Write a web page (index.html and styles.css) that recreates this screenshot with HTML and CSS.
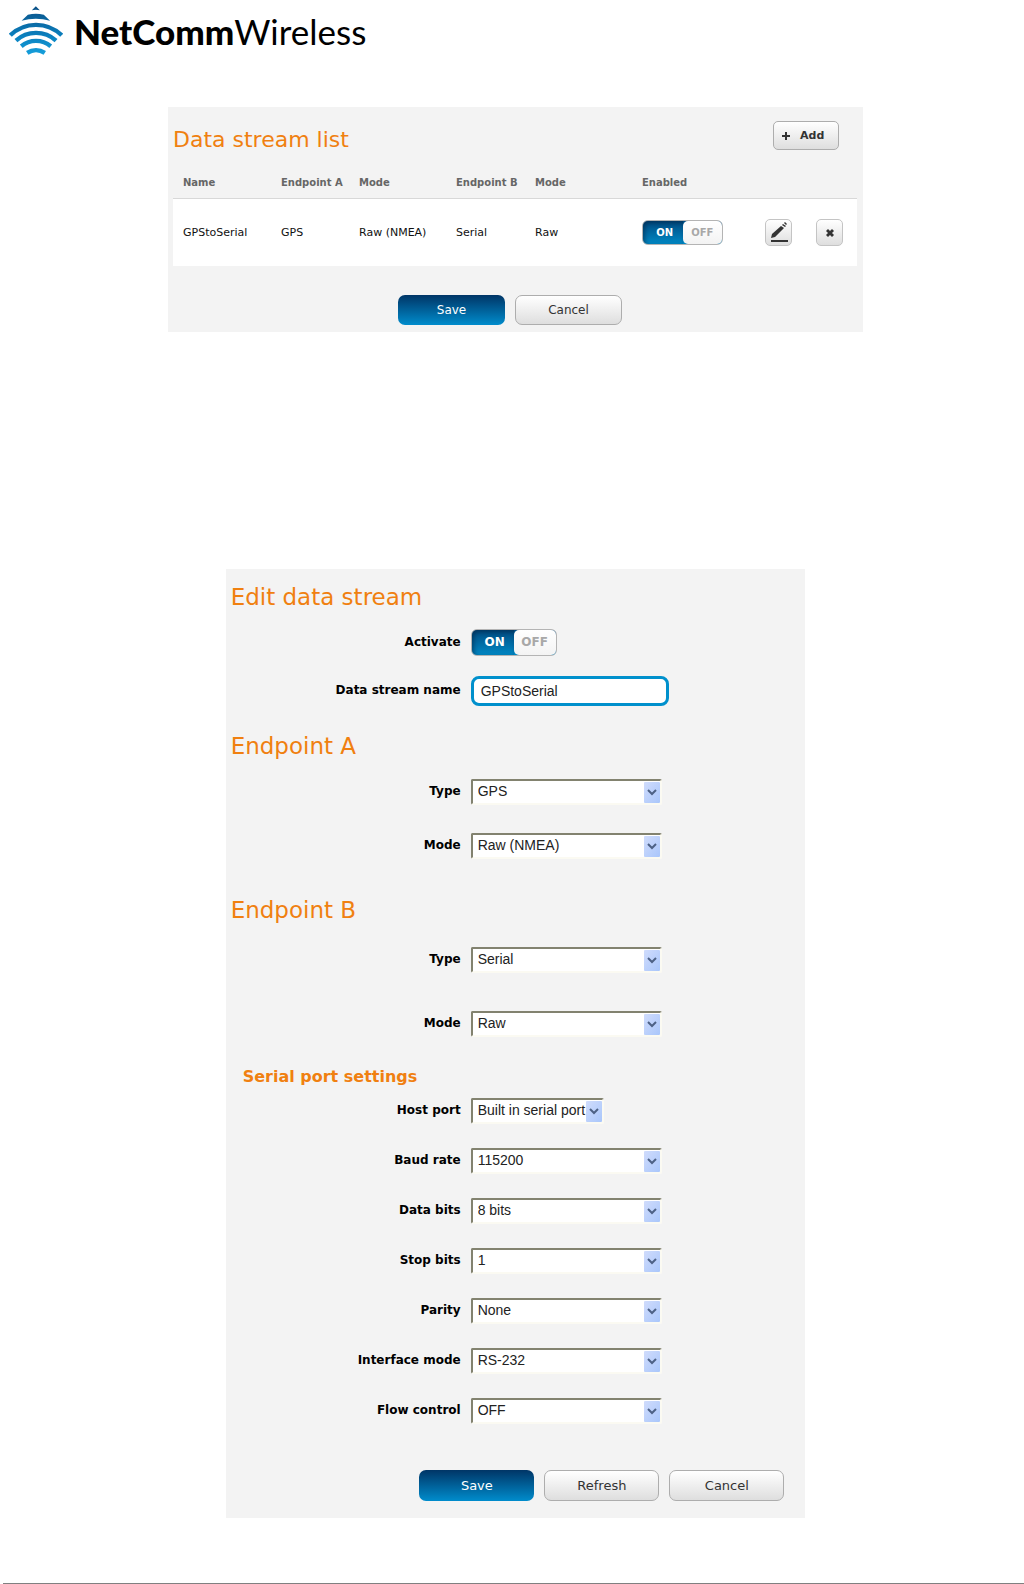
FILE: index.html
```html
<!DOCTYPE html>
<html lang="en">
<head>
    <meta charset="UTF-8">
    <meta name="viewport" content="width=device-width, initial-scale=1.0">
    <title>Data stream manager</title>
    <link rel="stylesheet" href="styles.css">
</head>
<body>
    <header class="header">
        <svg class="logo" viewBox="0 0 163 147" aria-hidden="true">
            <defs>
                <linearGradient id="logo-fill" x1="0" y1="0" x2="0" y2="147" gradientUnits="userSpaceOnUse">
                    <stop offset="0" stop-color="#0a4f85"/>
                    <stop offset="0.6" stop-color="#0b7fbd"/>
                    <stop offset="1" stop-color="#16a0dc"/>
                </linearGradient>
            </defs>
            <g fill="url(#logo-fill)">
                <path d="M81 0L93 12Q81 9 69 12Z"/>
                <path d="M57 26Q81 20 105 26L124 44Q81 32 38 44Z"/>
            </g>
            <g fill="none" stroke="url(#logo-fill)" stroke-width="13">
                <path d="M4 88A111 111 0 0 1 159 88"/>
                <path d="M21 104A90 90 0 0 1 142 104"/>
                <path d="M37 121A70 70 0 0 1 126 121"/>
                <path d="M55 141A48 48 0 0 1 108 141"/>
            </g>
        </svg>
        <div class="brand"><b>NetComm</b>Wireless</div>
    </header>

    <main class="main">
        <section class="panel list">
            <div class="list__head">
                <h1 class="list__title">Data stream list</h1>
                <button type="button" class="btn btn_add">
                    <svg viewBox="0 0 8 8" aria-hidden="true"><path d="M3 0h2v3h3v2H5v3H3V5H0V3h3z"/></svg>
                    Add
                </button>
            </div>
            <table class="streams">
                <colgroup>
                    <col class="col-name">
                    <col class="col-endpoint-a">
                    <col class="col-mode-a">
                    <col class="col-endpoint-b">
                    <col class="col-mode-b">
                    <col class="col-enabled">
                    <col class="col-action">
                    <col class="col-action">
                </colgroup>
                <thead>
                    <tr>
                        <th>Name</th>
                        <th>Endpoint A</th>
                        <th>Mode</th>
                        <th>Endpoint B</th>
                        <th>Mode</th>
                        <th>Enabled</th>
                        <th></th>
                        <th></th>
                    </tr>
                </thead>
                <tbody>
                    <tr>
                        <td>GPStoSerial</td>
                        <td>GPS</td>
                        <td>Raw (NMEA)</td>
                        <td>Serial</td>
                        <td>Raw</td>
                        <td>
                            <label class="toggle">
                                <input type="checkbox" aria-label="Enabled" checked>
                                <span class="toggle__on">ON</span>
                                <span class="toggle__off">OFF</span>
                            </label>
                        </td>
                        <td>
                            <button type="button" class="btn btn_icon" aria-label="Edit">
                                <svg viewBox="0 0 20 22" aria-hidden="true"><path d="M2 18h17v2H2zM2 16l1-4 9-8 3 2-9 9zM13 3l1-1 3 2-1 1zM15 1l1-1 2 2-1 1z"/></svg>
                            </button>
                        </td>
                        <td>
                            <button type="button" class="btn btn_icon" aria-label="Delete">
                                <svg viewBox="0 0 20 22" aria-hidden="true"><path d="M6 9l2-2 2 2 2-2 2 2-2 2 2 2-2 2-2-2-2 2-2-2 2-2z"/></svg>
                            </button>
                        </td>
                    </tr>
                </tbody>
            </table>
            <div class="list__actions">
                <button type="button" class="btn btn_primary">Save</button>
                <button type="button" class="btn">Cancel</button>
            </div>
        </section>

        <form class="panel edit">
            <h2 class="edit__title">Edit data stream</h2>
            <div class="fields">
                <div class="field">
                    <label for="activate">Activate</label>
                    <div class="toggle toggle_big">
                        <input type="checkbox" id="activate" checked>
                        <span class="toggle__on">ON</span>
                        <span class="toggle__off">OFF</span>
                    </div>
                </div>
                <div class="field">
                    <label for="stream-name">Data stream name</label>
                    <input type="text" class="text" id="stream-name" value="GPStoSerial">
                </div>
            </div>

            <h2 class="edit__title">Endpoint A</h2>
            <div class="fields fields_a">
                <div class="field">
                    <label for="type-a">Type</label>
                    <select class="select" id="type-a"><option>GPS</option></select>
                </div>
                <div class="field">
                    <label for="mode-a">Mode</label>
                    <select class="select" id="mode-a"><option>Raw (NMEA)</option></select>
                </div>
            </div>

            <h2 class="edit__title">Endpoint B</h2>
            <div class="fields fields_b">
                <div class="field">
                    <label for="type-b">Type</label>
                    <select class="select" id="type-b"><option>Serial</option></select>
                </div>
                <div class="field">
                    <label for="mode-b">Mode</label>
                    <select class="select" id="mode-b"><option>Raw</option></select>
                </div>
            </div>

            <h3 class="edit__subtitle">Serial port settings</h3>
            <div class="fields fields_serial">
                <div class="field">
                    <label for="host-port">Host port</label>
                    <select class="select select_short" id="host-port"><option>Built in serial port</option></select>
                </div>
                <div class="field">
                    <label for="baud-rate">Baud rate</label>
                    <select class="select" id="baud-rate"><option>115200</option></select>
                </div>
                <div class="field">
                    <label for="data-bits">Data bits</label>
                    <select class="select" id="data-bits"><option>8 bits</option></select>
                </div>
                <div class="field">
                    <label for="stop-bits">Stop bits</label>
                    <select class="select" id="stop-bits"><option>1</option></select>
                </div>
                <div class="field">
                    <label for="parity">Parity</label>
                    <select class="select" id="parity"><option>None</option></select>
                </div>
                <div class="field">
                    <label for="interface-mode">Interface mode</label>
                    <select class="select" id="interface-mode"><option>RS-232</option></select>
                </div>
                <div class="field">
                    <label for="flow-control">Flow control</label>
                    <select class="select" id="flow-control"><option>OFF</option></select>
                </div>
            </div>

            <div class="edit__actions">
                <button type="button" class="btn btn_primary">Save</button>
                <button type="button" class="btn">Refresh</button>
                <button type="button" class="btn">Cancel</button>
            </div>
        </form>
    </main>

    <footer class="footer"></footer>
</body>
</html>
```
FILE: styles.css
```css
* {
    box-sizing: border-box;
}
body {
    margin: 0;
    background-color: #fff;
    color: #111;
    font-family: "DejaVu Sans", Verdana, sans-serif;
    font-size: 12px;
}
h1, h2, h3 {
    margin: 0;
    color: #f08010;
    font-weight: 400;
}

/* header */
.header {
    display: flex;
    align-items: flex-start;
    gap: 11px;
    padding: 6px 9px 0;
    height: 107px;
}
.logo {
    width: 54px;
    height: 49px;
}
.brand {
    color: #000;
    font-family: Lato, sans-serif;
    font-size: 35px;
    line-height: 50px;
}
.brand b {
    font-weight: 900;
}

.main {
    padding-left: 7px;
}
.panel {
    margin: 0 auto;
    background-color: #f3f3f3;
}

/* buttons */
.btn {
    width: 107px;
    height: 30px;
    padding: 0;
    border: 1px solid #adadad;
    border-radius: 7px;
    background: linear-gradient(#fff, #dedede);
    color: #333;
    font-family: inherit;
    font-size: 12px;
    cursor: pointer;
}
.btn svg {
    fill: #333;
}
.btn_primary {
    border: none;
    background: linear-gradient(#003566, #008ccc);
    color: #fff;
}
.btn_add {
    display: flex;
    align-items: center;
    gap: 10px;
    width: 66px;
    height: 29px;
    padding-left: 8px;
    border-radius: 5px;
    font-size: 11px;
    font-weight: 700;
}
.btn_add svg {
    width: 8px;
    height: 8px;
}
.btn_icon {
    display: block;
    width: 27px;
    height: 27px;
    border-color: #c4c4c4;
    border-radius: 5px;
}
.btn_icon svg {
    display: block;
    width: 20px;
    height: 22px;
    margin: 0 auto;
}

/* on/off switch */
.toggle {
    display: flex;
    position: relative;
    width: 81px;
    height: 25px;
    border: 1px solid #b4b4b4;
    border-radius: 6px;
    background: linear-gradient(#004a80, #0088c4);
    font-size: 10px;
    font-weight: 700;
    line-height: 23px;
    text-align: center;
}
.toggle input {
    position: absolute;
    inset: 0;
    width: 100%;
    height: 100%;
    margin: 0;
    opacity: 0;
    cursor: pointer;
}
.toggle__on {
    width: 50%;
    padding-left: 4px;
    border-radius: 5px 0 0 5px;
    box-shadow: inset 2px 2px 4px rgba(0, 30, 60, 0.5);
    color: #fff;
}
.toggle__off {
    width: 50%;
    border-radius: 5px;
    background: linear-gradient(#fff, #f3f3f3);
    color: #a8a8a8;
}
.toggle_big {
    width: 86px;
    height: 27px;
    font-size: 12px;
    line-height: 25px;
}

/* data stream list */
.list {
    width: 69%;
    max-width: 695px;
    padding: 14px 6px 7px 5px;
}
.list__head {
    display: flex;
    align-items: flex-end;
    justify-content: space-between;
    padding-right: 18px;
}
.list__title {
    font-size: 22px;
    line-height: 20px;
}
.streams {
    width: 100%;
    margin-top: 17px;
    border-collapse: separate;
    border-spacing: 0;
    table-layout: fixed;
}
.streams th,
.streams td {
    padding: 0 0 0 10px;
    text-align: left;
    white-space: nowrap;
}
.streams th {
    height: 32px;
    border-bottom: 1px solid #d8d8d8;
    color: #666;
    font-size: 10px;
}
.streams td {
    height: 67px;
    background-color: #fff;
    font-size: 11px;
}
.col-name {
    width: 98px;
}
.col-endpoint-a {
    width: 78px;
}
.col-mode-a {
    width: 97px;
}
.col-endpoint-b {
    width: 79px;
}
.col-mode-b {
    width: 107px;
}
.col-enabled {
    width: 123px;
}
.col-action {
    width: 51px;
}
.list__actions {
    display: flex;
    justify-content: center;
    gap: 10px;
    margin-top: 29px;
    padding-right: 10px;
}

/* edit form */
.edit {
    width: 57%;
    min-width: 579px;
    margin-top: 237px;
    padding: 14px 21px 17px 5px;
}
.edit__title {
    font-size: 23px;
    line-height: 28px;
}
.fields {
    display: flex;
    flex-direction: column;
    gap: 20px;
    margin: 18px 0 26px;
}
.fields_a {
    gap: 28px;
    margin: 19px 0 37px;
}
.fields_b {
    gap: 38px;
    margin: 23px 0 30px;
}
.fields_serial {
    gap: 24px;
    margin: 11px 0 46px;
}
.field {
    display: grid;
    grid-template-columns: 230px auto;
    justify-content: start;
    align-items: center;
    column-gap: 10px;
}
.field > label {
    padding-bottom: 2px;
    color: #000;
    font-weight: 700;
    text-align: right;
}
.text {
    width: 198px;
    height: 30px;
    padding: 0 7px;
    border: 3px solid #0090cc;
    border-radius: 8px;
    outline: none;
    background-color: #fff;
    color: #222;
    font-family: "Liberation Sans", Arial, sans-serif;
    font-size: 14px;
}
.select {
    width: 191px;
    height: 26px;
    padding: 0 20px 3px 5px;
    border: 2px solid;
    border-color: #82826f #fbfaf2 #fbfaf2 #82826f;
    border-radius: 2px;
    outline: none;
    appearance: none;
    background: #fff url("data:image/svg+xml,%3Csvg xmlns='http://www.w3.org/2000/svg' width='16' height='21'%3E%3ClinearGradient id='g' x2='1' y2='1'%3E%3Cstop stop-color='%23d0dcfc'/%3E%3Cstop offset='1' stop-color='%23a9c6fb'/%3E%3C/linearGradient%3E%3Crect width='16' height='21' rx='1' fill='url(%23g)'/%3E%3Cpath d='M4 8l4 4 4-4' fill='none' stroke='%234d6185' stroke-width='2'/%3E%3C/svg%3E") no-repeat right top 1px;
    color: #222;
    font-family: "Liberation Sans", Arial, sans-serif;
    font-size: 14px;
}
.select_short {
    width: 133px;
    padding-right: 16px;
}
.edit__subtitle {
    padding-left: 12px;
    font-size: 16px;
    font-weight: 700;
    line-height: 20px;
}
.edit__actions {
    display: flex;
    justify-content: flex-end;
    gap: 10px;
}
.edit__actions .btn {
    width: 115px;
    height: 31px;
    font-size: 13px;
}

.footer {
    margin: 65px 0 0 3px;
    border-top: 1px solid #808080;
}
```
